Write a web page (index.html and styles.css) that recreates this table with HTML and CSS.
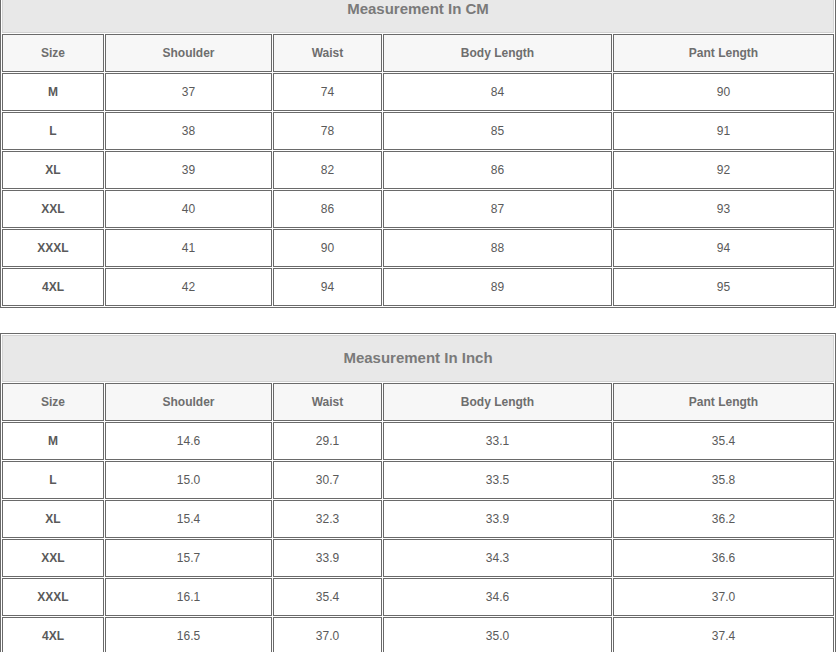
FILE: index.html
```html
<!DOCTYPE html>
<html>
<head>
<meta charset="utf-8">
<link rel="stylesheet" href="styles.css">
</head>
<body>
<table class="size-table first">
  <colgroup><col class="c1"><col class="c2"><col class="c3"><col class="c4"><col class="c5"></colgroup>
  <tr><td class="title" colspan="5">Measurement In CM</td></tr>
  <tr class="head"><td>Size</td><td>Shoulder</td><td>Waist</td><td>Body Length</td><td>Pant Length</td></tr>
  <tr><td class="size">M</td><td>37</td><td>74</td><td>84</td><td>90</td></tr>
  <tr><td class="size">L</td><td>38</td><td>78</td><td>85</td><td>91</td></tr>
  <tr><td class="size">XL</td><td>39</td><td>82</td><td>86</td><td>92</td></tr>
  <tr><td class="size">XXL</td><td>40</td><td>86</td><td>87</td><td>93</td></tr>
  <tr><td class="size">XXXL</td><td>41</td><td>90</td><td>88</td><td>94</td></tr>
  <tr><td class="size">4XL</td><td>42</td><td>94</td><td>89</td><td>95</td></tr>
</table>
<table class="size-table second">
  <colgroup><col class="c1"><col class="c2"><col class="c3"><col class="c4"><col class="c5"></colgroup>
  <tr><td class="title" colspan="5">Measurement In Inch</td></tr>
  <tr class="head"><td>Size</td><td>Shoulder</td><td>Waist</td><td>Body Length</td><td>Pant Length</td></tr>
  <tr><td class="size">M</td><td>14.6</td><td>29.1</td><td>33.1</td><td>35.4</td></tr>
  <tr><td class="size">L</td><td>15.0</td><td>30.7</td><td>33.5</td><td>35.8</td></tr>
  <tr><td class="size">XL</td><td>15.4</td><td>32.3</td><td>33.9</td><td>36.2</td></tr>
  <tr><td class="size">XXL</td><td>15.7</td><td>33.9</td><td>34.3</td><td>36.6</td></tr>
  <tr><td class="size">XXXL</td><td>16.1</td><td>35.4</td><td>34.6</td><td>37.0</td></tr>
  <tr><td class="size">4XL</td><td>16.5</td><td>37.0</td><td>35.0</td><td>37.4</td></tr>
</table>
</body>
</html>
```
FILE: styles.css
```css
html, body {
  margin: 0;
  padding: 0;
  background: #ffffff;
  overflow: hidden;
}
body {
  font-family: "Liberation Sans", Arial, sans-serif;
  font-size: 12px;
  color: #555555;
}
.size-table {
  table-layout: fixed;
  width: 836px;
  border-collapse: separate;
  border-spacing: 1px;
  border: 1px solid #6a6a6a;
}
.size-table.first { margin-top: -16px; }
.size-table.second { margin-top: 25px; }
.c1 { width: 102px; }
.c2 { width: 167px; }
.c3 { width: 109px; }
.c4 { width: 229px; }
.c5 { width: 221px; }
.size-table td {
  box-sizing: border-box;
  border: 1px solid #6a6a6a;
  height: 38px;
  padding: 0;
  text-align: center;
  vertical-align: middle;
  background: #ffffff;
  color: #5a5a5a;
}
.size-table td.title {
  height: 47px;
  padding-bottom: 2px;
  background: #e8e8e8;
  border-color: #d2d2d2;
  font-size: 15px;
  font-weight: bold;
  color: #7a7a7a;
}
.size-table .head td {
  background: #f7f7f7;
  font-weight: bold;
  color: #6e6e6e;
}
.size-table td.size {
  font-weight: bold;
  color: #5a5a5a;
}
```
